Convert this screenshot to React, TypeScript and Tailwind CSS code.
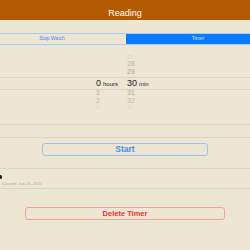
import React from 'react';

const hourRows = [
  { h: 'h-[6px]', leading: 'leading-[6px]', size: 'text-[5px]', color: 'text-[#ddd5c2]', hour: '', min: '27' },
  { h: 'h-[7px]', leading: 'leading-[7px]', size: 'text-[7px]', color: 'text-[#bdb6a6]', hour: '', min: '28' },
  { h: 'h-[9px]', leading: 'leading-[9px]', size: 'text-[7px]', color: 'text-[#aaa396]', hour: '', min: '29' },
];

const lowerRows = [
  { h: 'h-[5px]', leading: 'leading-[5px]', size: 'text-[7px]', color: 'text-[#b3ac9d]', hour: '1', min: '31' },
  { h: 'h-[11px]', leading: 'leading-[11px]', size: 'text-[7px]', color: 'text-[#c2bbab]', hour: '2', min: '32' },
  { h: 'h-[3px]', leading: 'leading-[3px]', size: 'text-[5px]', color: 'text-[#dcd4c1]', hour: '3', min: '33' },
];

const PickerRow = ({ row }: { row: (typeof hourRows)[number] }) => (
  <div className={`flex ${row.h} ${row.leading} ${row.size} ${row.color}`}>
    <div className="w-[96px]" />
    <div className="w-[31px]">{row.hour}</div>
    <div>{row.min}</div>
  </div>
);

export default function App() {
  return (
    <div
      className="w-[250px] h-[250px] overflow-hidden bg-[#ede6d4]"
      style={{ fontFamily: '"Liberation Sans", Arial, sans-serif' }}
    >
      {/* nav bar */}
      <div className="h-[20px] bg-[#b35a02] flex justify-center pt-[8px]">
        <span className="text-white text-[9px] leading-[11px]">Reading</span>
      </div>

      {/* segmented control */}
      <div className="mt-[13px] -ml-[23px] w-[294px] h-[12px] flex border border-[#a9cbee] text-[5px]">
        <div className="w-[148px] flex items-center justify-center text-[#3a8ef0]">Stop Watch</div>
        <div className="flex-1 bg-[#0a7aff] flex items-center justify-center text-[#cfe3ff]">Timer</div>
      </div>

      {/* picker */}
      <div className="pt-[9px] h-[80px] border-b border-[#dcd4c1]">
        {hourRows.map((r) => (
          <PickerRow key={r.min} row={r} />
        ))}
        <div className="h-[1px]" />
        <div className="flex h-[13px] items-center border-y border-[#ddd6c4] text-[#222]">
          <div className="w-[96px]" />
          <div className="w-[31px] flex items-baseline">
            <span className="text-[9px]">0</span>
            <span className="text-[6px] ml-[2px]">hours</span>
          </div>
          <div className="flex items-baseline">
            <span className="text-[9px]">30</span>
            <span className="text-[6px] ml-[2px]">min</span>
          </div>
        </div>
        {lowerRows.map((r) => (
          <PickerRow key={r.min} row={r} />
        ))}
      </div>

      <div className="h-[13px] border-b border-[#dcd4c1]" />

      {/* start */}
      <div className="px-[42px] mt-[5px]">
        <button className="block w-full h-[13px] rounded-[3px] border border-[#9dc3ec] text-[#3a8ef0] text-[8.5px] font-bold leading-[11px]">
          Start
        </button>
      </div>

      {/* info row */}
      <div className="mt-[12px] h-[21px] border-y border-[#dcd4c1] relative">
        <div className="absolute left-[-1px] top-[6px] w-[3px] h-[4px] rounded-full bg-[#1c1c1c]" />
        <div className="pt-[12px] pl-[2px] text-[4px] leading-[5px] text-[#b0a999]">Created: Jan 26, 2015</div>
      </div>

      {/* delete */}
      <div className="px-[25px] mt-[18px]">
        <button className="block w-full h-[13px] rounded-[3px] border border-[#f2a294] text-[#f0302a] text-[7.5px] font-bold leading-[11px]">
          Delete Timer
        </button>
      </div>
    </div>
  );
}
